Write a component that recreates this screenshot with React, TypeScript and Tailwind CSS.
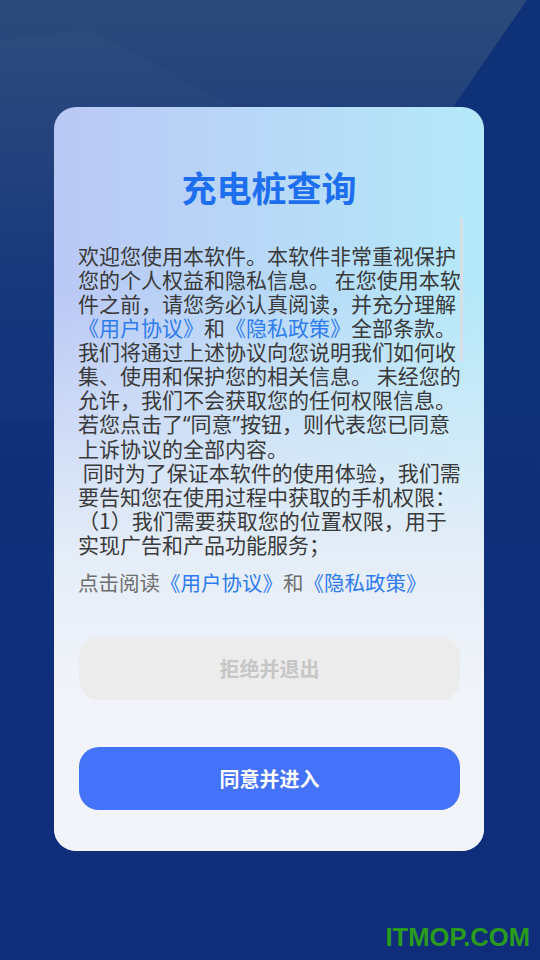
import React from 'react'

const cjk = { fontFamily: '"Noto Sans CJK SC", "Noto Sans", sans-serif' }

const Q = ({ c }: { c: string }) => (
  <span style={{ fontFamily: '"Noto Sans", sans-serif' }}>{c}</span>
)

const lines: React.ReactNode[] = [
  '欢迎您使用本软件。本软件非常重视保护',
  '您的个人权益和隐私信息。 在您使用本软',
  '件之前，请您务必认真阅读，并充分理解',
  <>
    <span className="text-[#2f7bf0]">《用户协议》</span>和<span className="text-[#2f7bf0]">《隐私政策》</span>全部条款。
  </>,
  '我们将通过上述协议向您说明我们如何收',
  '集、使用和保护您的相关信息。 未经您的',
  '允许，我们不会获取您的任何权限信息。',
  <>
    若您点击了<Q c="“" />同意<Q c="”" />按钮，则代表您已同意
  </>,
  '上诉协议的全部内容。',
  ' 同时为了保证本软件的使用体验，我们需',
  '要告知您在使用过程中获取的手机权限：',
  '（1）我们需要获取您的位置权限，用于',
  '实现广告和产品功能服务；',
]

export default function App() {
  return (
    <div
      className="relative w-[540px] h-[960px] overflow-hidden bg-gradient-to-b from-[#2c4a7b] via-[#10307a] via-35% to-[#0f2d7a]"
      style={cjk}
    >
      {/* background shapes */}
      <svg className="absolute left-0 top-0" width="540" height="420" viewBox="0 0 540 420">
        <polygon points="0,40 90,30 240,110 240,420 0,420" fill="#ffffff" opacity="0.02" />
        <polygon points="527,0 540,0 540,420 237,420" fill="#0f3177" />
      </svg>

      <div className="relative pt-[107px] pl-[54px]">
        <div className="relative w-[430px] h-[744px] rounded-[22px] overflow-hidden bg-gradient-to-r from-[#bac8f5] to-[#b4e9f9]">
          <div className="absolute inset-0 bg-gradient-to-b from-transparent from-25% via-[#e4edf8] via-60% to-[#f2f4fa] to-80%" />

          <div className="relative flex flex-col">
            <h1 className="pt-[56px] text-center text-[35px] leading-[48px] font-bold text-[#1e6ff0]">
              充电桩查询
            </h1>

            <div className="relative mt-[4px] h-[346px] overflow-hidden pt-[28px] pl-[24px] text-[21px] leading-[24px] text-[#3a3a3a]">
              {lines.map((l, i) => (
                <div key={i} className="whitespace-pre">
                  {l}
                </div>
              ))}
              <div className="absolute right-[21px] top-[2px] w-[3px] h-[145px] rounded-full bg-[#d9dee6]" />
            </div>

            <p className="mt-[9px] pl-[24px] text-[20.5px] leading-[24px] text-[#6e6e6e]">
              点击阅读<span className="text-[#2f7bf0]">《用户协议》</span>和
              <span className="text-[#2f7bf0]">《隐私政策》</span>
            </p>

            <div className="flex flex-col gap-[47px] mt-[43px] pl-[25px] pr-[24px]">
              <button className="h-[63px] rounded-[20px] bg-[#ececec] text-[20px] font-bold text-[#c6c6c6]">
                拒绝并退出
              </button>
              <button className="h-[63px] rounded-[20px] bg-[#4472f9] text-[20px] font-bold text-white">
                同意并进入
              </button>
            </div>
          </div>
        </div>
      </div>

      <div
        className="absolute right-[10px] top-[920px] text-[25.6px] leading-[34px] font-bold text-[#2a9b1c]"
        style={{ fontFamily: '"Liberation Sans", Arial, sans-serif' }}
      >
        ITMOP.COM
      </div>
    </div>
  )
}
